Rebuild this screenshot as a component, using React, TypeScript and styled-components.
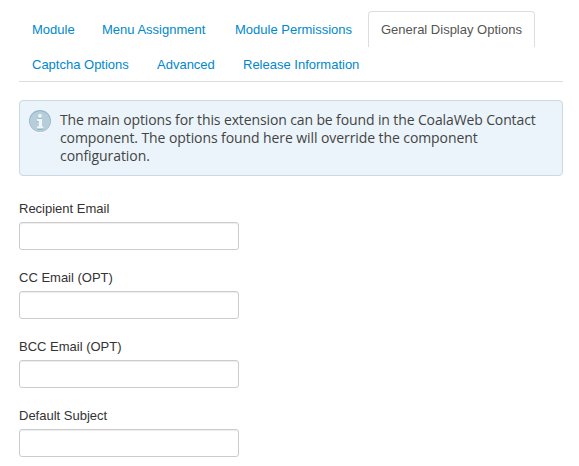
import React from "react";
import styled, { createGlobalStyle } from "styled-components";

const GlobalStyle = createGlobalStyle`
  * { box-sizing: border-box; }
  body { margin: 0; background: #fff; color: #333; font: 13px/18px "Liberation Sans", Arial, sans-serif; overflow: hidden; }
`;

const Page = styled.main`
  height: 466px;
  padding: 11px 16px 0 19px;
  overflow: hidden;
`;

const Tabs = styled.nav`
  display: flex;
  flex-wrap: wrap;
  align-content: flex-start;
  height: 71px;
  margin-bottom: 18px;
  border-bottom: 1px solid #ddd;
`;

const Tab = styled.a<{ $width: number; $active?: boolean }>`
  width: ${(p) => p.$width}px;
  height: ${(p) => (p.$active ? 36 : 35)}px;
  margin: 0 2px ${(p) => (p.$active ? -1 : 0)}px 0;
  padding: 9px 12px 0;
  border: 1px solid ${(p) => (p.$active ? "#ddd" : "transparent")};
  border-bottom: 0;
  border-radius: 4px 4px 0 0;
  color: ${(p) => (p.$active ? "#555" : "#0088cc")};
  white-space: nowrap;
`;

const Notice = styled.section`
  display: flex;
  height: 76px;
  margin-bottom: 24px;
  padding: 9px;
  gap: 9px;
  border: 1px solid #cbd9e1;
  border-radius: 4px;
  background: #ebf4fa;
`;

const NoticeIcon = styled.svg`
  flex: none;
  width: 22px;
  height: 23px;
`;

const NoticeText = styled.div`
  padding-top: 1px;
  font: 14px/18px "Open Sans", sans-serif;
  color: #444;
  white-space: nowrap;
`;

const NoticeLine = styled.div<{ $tracking: number }>`
  letter-spacing: ${(p) => p.$tracking}px;
`;

const Form = styled.form`
  display: grid;
  gap: 19px;
`;

const Field = styled.label`
  display: block;
  height: 50px;
`;

const Input = styled.input`
  display: block;
  width: 220px;
  height: 28px;
  margin-top: 4px;
  border: 1px solid #ccc;
  border-radius: 3px;
  box-shadow: inset 0 1px 1px rgba(0, 0, 0, 0.075);
`;

const tabs = [
  { label: "Module", width: 68 },
  { label: "Menu Assignment", width: 131 },
  { label: "Module Permissions", width: 144 },
  { label: "General Display Options", width: 167, active: true },
  { label: "Captcha Options", width: 123 },
  { label: "Advanced", width: 84 },
  { label: "Release Information", width: 142 },
];

const noticeLines = [
  { text: "The main options for this extension can be found in the CoalaWeb Contact", tracking: -0.12 },
  { text: "component. The options found here will override the component", tracking: -0.085 },
  { text: "configuration.", tracking: -0.08 },
];

const fields = ["Recipient Email", "CC Email (OPT)", "BCC Email (OPT)", "Default Subject"];

export default function App() {
  return (
    <Page>
      <GlobalStyle />
      <Tabs>
        {tabs.map((t) => (
          <Tab key={t.label} $width={t.width} $active={t.active}>{t.label}</Tab>
        ))}
      </Tabs>
      <Notice>
        <NoticeIcon viewBox="0 0 22 23">
          <circle cx="11" cy="12" r="11" fill="#f8fcfe" />
          <circle cx="11" cy="11" r="11" fill="#97b6c8" />
          <circle cx="11" cy="11.6" r="10.3" fill="#b6cdda" />
          <g fill="#8eafc2">
            <circle cx="11" cy="7" r="2.1" />
            <path d="M8 9.7h5v8h1.4v2H8v-2h1.5v-6H8z" />
          </g>
          <g fill="#f0f7fb">
            <circle cx="11" cy="6" r="2" />
            <path d="M8 9h5v7.5h1.3v2H8v-2h1.6v-5.6H8z" />
          </g>
        </NoticeIcon>
        <NoticeText>
          {noticeLines.map((l) => (
            <NoticeLine key={l.text} $tracking={l.tracking}>{l.text}</NoticeLine>
          ))}
        </NoticeText>
      </Notice>
      <Form>
        {fields.map((f) => (
          <Field key={f}>{f}<Input /></Field>
        ))}
      </Form>
    </Page>
  );
}
